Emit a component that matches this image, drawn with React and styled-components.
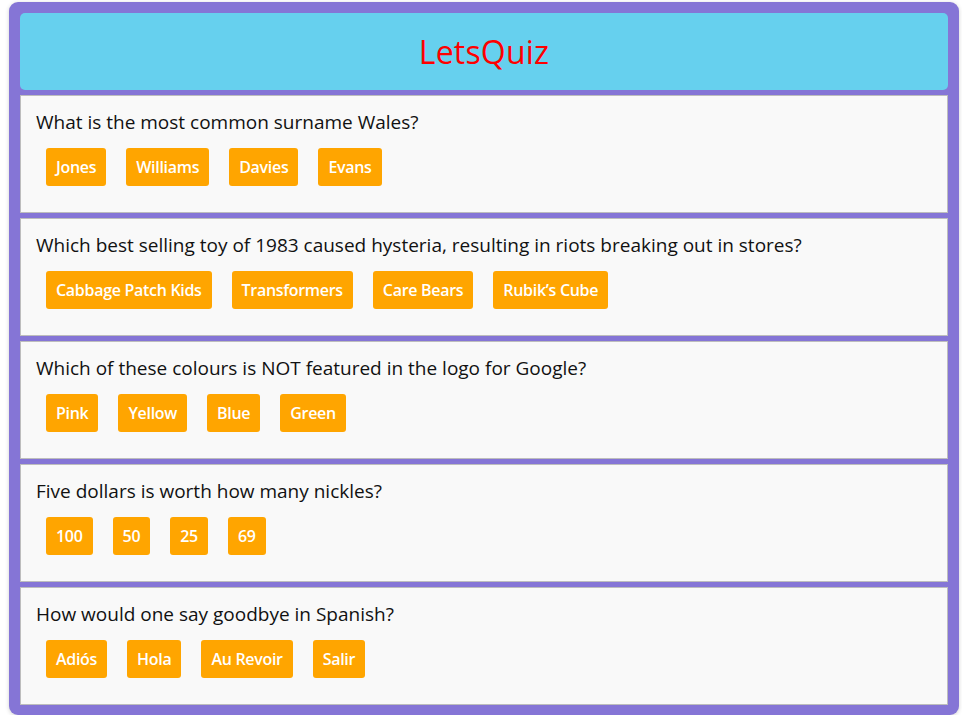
import styled, { createGlobalStyle } from 'styled-components';

const Global = createGlobalStyle`
  body{margin:0;background:#fff;font-family:"Open Sans",Lato,sans-serif;}
`;

/* ── Styled Components ───────────────────────────────────────── */
const Frame = styled.div`
  margin:2px 3px 0 9px;padding:11px 11px 10px 11px;background:#8575d6;border-radius:9px;
  box-shadow:0 1px 4px rgba(0,0,0,0.18);display:flex;flex-direction:column;gap:5px;
`;
const Header = styled.header`
  height:77px;background:#66d0ee;border-radius:5px;display:flex;align-items:center;justify-content:center;
`;
const Title = styled.h1`margin:0;font-weight:400;font-size:32px;color:#ff0000;letter-spacing:0.2px;`;
const Card = styled.section`
  background:#f9f9f9;border:1px solid #bdbdbd;padding:14px 15px 26px 15px;height:118px;box-sizing:border-box;
`;
const Question = styled.p`margin:0 0 14px 0;font-size:19px;line-height:24px;color:#111;letter-spacing:0;`;
const Answers = styled.div`display:flex;gap:20px;padding-left:10px;`;
const Answer = styled.button`
  height:38px;padding:0 10px;border:none;border-radius:3px;background:#ffa500;color:#fff;
  font-family:inherit;font-size:16px;font-weight:600;letter-spacing:-0.3px;cursor:pointer;
`;

const QUESTIONS = [
    { q: 'What is the most common surname Wales?', a: ['Jones', 'Williams', 'Davies', 'Evans'] },
    { q: 'Which best selling toy of 1983 caused hysteria, resulting in riots breaking out in stores?', a: ['Cabbage Patch Kids', 'Transformers', 'Care Bears', "Rubik’s Cube"] },
    { q: 'Which of these colours is NOT featured in the logo for Google?', a: ['Pink', 'Yellow', 'Blue', 'Green'] },
    { q: 'Five dollars is worth how many nickles?', a: ['100', '50', '25', '69'] },
    { q: 'How would one say goodbye in Spanish?', a: ['Adiós', 'Hola', 'Au Revoir', 'Salir'] },
];

/* ── Component ───────────────────────────────────────────────── */
export default function App() {
    return (
        <>
            <Global />
            <Frame>
                <Header><Title>LetsQuiz</Title></Header>
                {QUESTIONS.map(item => (
                    <Card key={item.q}>
                        <Question>{item.q}</Question>
                        <Answers>
                            {item.a.map(ans => <Answer key={ans}>{ans}</Answer>)}
                        </Answers>
                    </Card>
                ))}
            </Frame>
        </>
    );
}
